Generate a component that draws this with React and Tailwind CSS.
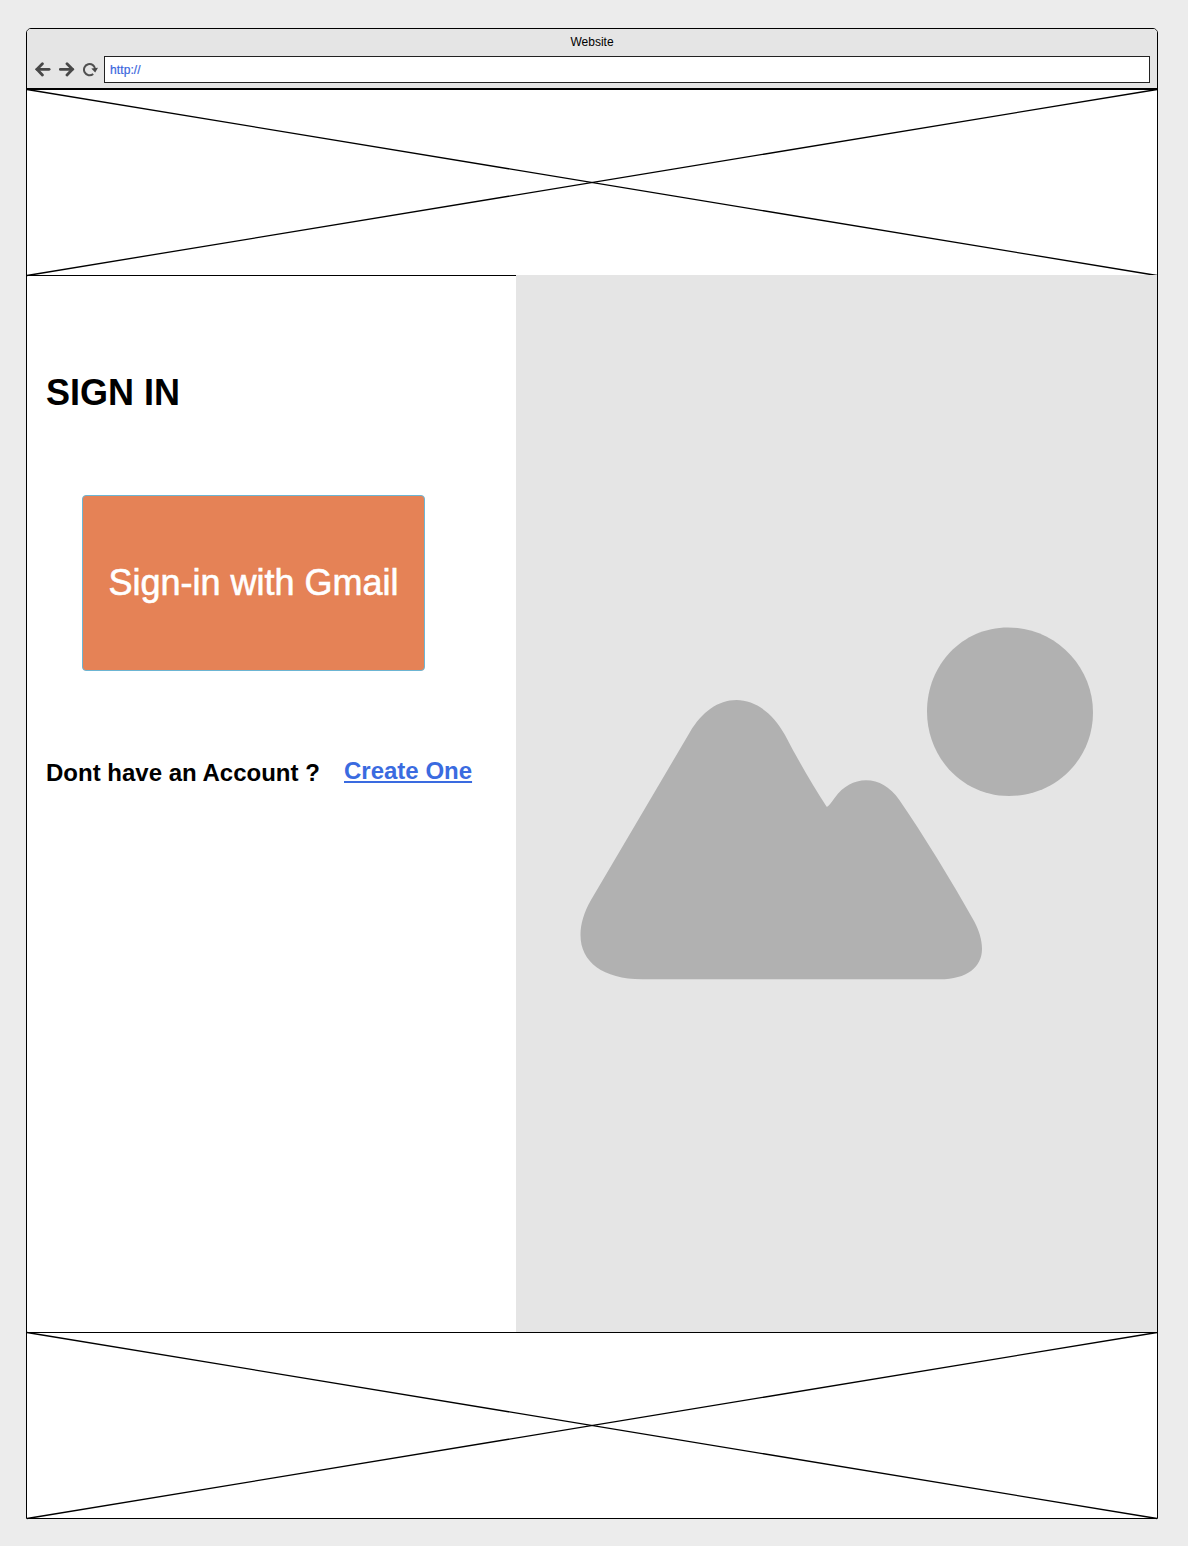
function BackIcon() {
  return (
    <svg width="16" height="16" viewBox="0 0 16 16" fill="none" stroke="#484848" strokeWidth="2.8" strokeLinecap="round">
      <path d="M2 7.3H14.1" />
      <path d="M7.4 1.7L1.9 7.3L7.4 12.9" />
    </svg>
  );
}

function ForwardIcon() {
  return (
    <svg width="16" height="16" viewBox="0 0 16 16" fill="none" stroke="#484848" strokeWidth="2.8" strokeLinecap="round">
      <path d="M1.3 7.3H13.4" />
      <path d="M8 1.7L13.5 7.3L8 12.9" />
    </svg>
  );
}

function ReloadIcon() {
  return (
    <svg width="16" height="16" viewBox="0 0 16 16" fill="none">
      <path d="M10.2 12A5.6 5.6 0 1 1 12.2 7.4" stroke="#505050" strokeWidth="2" />
      <path d="M8.3 6.4L15 5.8L12.2 10.6Z" fill="#484848" />
    </svg>
  );
}

function CrossedBox() {
  return (
    <svg className="block h-full w-full overflow-visible" viewBox="0 0 1130 185" preserveAspectRatio="none">
      <path d="M0 -0.5L1130 185.5M0 185.5L1130 -0.5" stroke="#000" strokeWidth="1.3" />
    </svg>
  );
}

function BrowserBar() {
  return (
    <header className="h-[61px] shrink-0 rounded-t-[4px] border-b-2 border-black bg-[#e5e5e5]">
      <div className="flex h-[27px] items-center justify-center text-[12px] leading-[26px]">
        <span className="pb-[2px]">Website</span>
      </div>
      <div className="flex h-[27px] items-center gap-2 pr-[7px] pl-[8px]">
        <BackIcon />
        <ForwardIcon />
        <ReloadIcon />
        <div className="-ml-[3px] flex h-[27px] flex-1 items-center border border-[#222] bg-white pl-[5px] text-[12px] tracking-[0.1px] text-[#3a66dd] [-webkit-text-stroke:0.2px_#3a66dd]">
          http://
        </div>
      </div>
    </header>
  );
}

function SignIn() {
  return (
    <section className="w-[489px] border-t border-black pl-[19px]">
      <h1 className="mt-[96px] text-[36px] leading-[42px] font-bold">SIGN IN</h1>
      <button className="mt-[81px] ml-[36px] block h-[176px] w-[343px] rounded-[4px] border border-[#6cb5d3] bg-[#e58256] text-[36px] whitespace-nowrap text-white [-webkit-text-stroke:0.6px_white]">
        Sign-in with Gmail
      </button>
      <div className="mt-[86px] flex items-start text-[24px] leading-[28px] font-bold whitespace-nowrap">
        <p className="mt-[2px] w-[298px]">Dont have an Account ?</p>
        <a href="#create" className="text-[#3a6be0] underline decoration-2 underline-offset-[2px]">
          Create One
        </a>
      </div>
    </section>
  );
}

function ImagePlaceholder() {
  return (
    <div className="flex-1 bg-[#e5e5e5]">
      <svg className="block h-full w-full" viewBox="516 275 641 1057" fill="#b1b1b1">
        <path d="M927 711.5C927 665 962 627.500 1008 627.500C1055 627.500 1093 666 1093 712.500C1093 759 1056 796 1009 796C963 796 927 758 927 711.500Z" />
        <path d="M690 732C702 712 718 700 736.500 700C755 700 773 713 785 735C798 760 812 784 826.500 806.500Q827 807 828 806.300C831 803.500 833 800 835 797.500C843 786.500 854 780.300 866 780.300C879 780.300 890 787 899 799.500C924 836 951 880 974 921C979 930 982 940 982 949C982 967 967 979.300 940 979.300H642C603 979 580.500 962 580.500 935C580.500 924 584 912 591 900Z" />
      </svg>
    </div>
  );
}

export default function App() {
  return (
    <div className="h-[1546px] w-[1188px] bg-[#ececec] pt-[28px] pl-[26px] font-['Liberation_Sans',Arial,sans-serif] text-black">
      <div className="flex h-[1491px] w-[1132px] flex-col rounded-t-[5px] border border-black bg-white">
        <BrowserBar />
        <div className="h-[185px] shrink-0">
          <CrossedBox />
        </div>
        <main className="relative flex h-[1057px] shrink-0">
          <SignIn />
          <ImagePlaceholder />
        </main>
        <footer className="h-[186px] shrink-0 border-t border-black">
          <CrossedBox />
        </footer>
      </div>
    </div>
  );
}
